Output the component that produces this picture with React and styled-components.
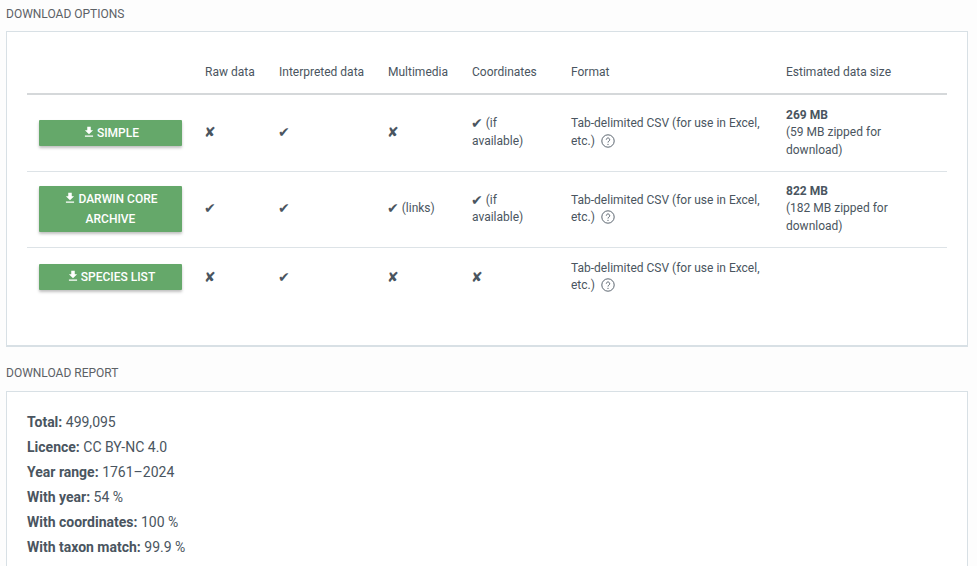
import React from 'react'
import styled, { createGlobalStyle } from 'styled-components'

const GlobalStyle = createGlobalStyle`
  html, body {
    margin: 0;
    padding: 0;
    background: #fdfdfd;
    color: #4a5560;
    font-family: Roboto, "Liberation Sans", sans-serif;
    font-size: 12px;
    overflow: hidden;
  }
`

const Page = styled.div`
  width: 977px;
  height: 566px;
  padding: 0 9px 0 6px;
  box-sizing: border-box;
  overflow: hidden;
`

const SectionTitle = styled.h2`
  margin: 0;
  height: ${p => p.$height}px;
  padding-top: 7px;
  box-sizing: border-box;
  font-size: 12px;
  line-height: 14px;
  font-weight: 400;
  color: #5c6166;
  text-transform: uppercase;
`

const Card = styled.section`
  background: #fff;
  border: 1px solid #d8e0e5;
  border-bottom-width: 2px;
  box-sizing: border-box;
  padding: ${p => p.$padding};
  height: ${p => p.$height};
  margin-bottom: 12px;
`

const Table = styled.table`
  width: 920px;
  table-layout: fixed;
  border-collapse: collapse;
  color: #4a5560;
`

const Col = styled.col`
  width: ${p => p.$width}px;
`

const HeadCell = styled.th`
  height: 62px;
  padding: 0 12px 12px;
  box-sizing: border-box;
  border-bottom: 2px solid #d5d8da;
  text-align: left;
  font-weight: 400;
  line-height: 17px;
  vertical-align: bottom;
  white-space: nowrap;
`

const Row = styled.tr`
  height: ${p => p.$height}px;
  border-bottom: ${p => (p.$last ? 'none' : '1px solid #dde3e7')};
`

const Cell = styled.td`
  padding: 0 12px;
  box-sizing: border-box;
  line-height: 17.5px;
  vertical-align: middle;
`

const Mark = styled.span`
  font-family: "DejaVu Sans", sans-serif;
  font-size: 14px;
  line-height: 1;
  margin-left: -1px;
  vertical-align: -1px;
  color: #4a5560;
`

const DownloadButton = styled.button`
  display: block;
  width: 143px;
  min-height: 26px;
  padding: 3px 12px;
  box-sizing: border-box;
  border: none;
  border-radius: 1px;
  background: #65a86a;
  color: #fff;
  font-family: inherit;
  font-size: 12px;
  font-weight: 500;
  line-height: 20px;
  text-align: center;
  text-transform: uppercase;
  box-shadow: 0 2px 3px rgba(0, 0, 0, 0.25);
`

const ButtonIcon = styled.svg`
  width: 14px;
  height: 14px;
  margin-right: 1px;
  vertical-align: -2px;
  fill: #fff;
`

const HelpIcon = styled.svg`
  width: 14px;
  height: 14px;
  margin-left: 3px;
  vertical-align: -3px;
  fill: none;
  stroke: #4a5560;
`

const ReportBody = styled.div`
  line-height: 25px;
  font-size: 14px;
  color: #4a5560;
`

const ReportLine = styled.div`
  strong {
    font-weight: 700;
  }
`

const Download = ({ label }) => (
  <DownloadButton>
    <ButtonIcon viewBox="0 0 24 24">
      <path d="M19 9h-4V3H9v6H5l7 7 7-7zM5 18v2h14v-2H5z" />
    </ButtonIcon>
    {label}
  </DownloadButton>
)

const Help = () => (
  <HelpIcon viewBox="0 0 14 14">
    <circle cx="7" cy="7" r="6.2" strokeWidth="0.9" />
    <path d="M5.3 5.6a1.7 1.7 0 1 1 2.6 1.5c-.6.4-.9.7-.9 1.4" strokeWidth="0.9" />
    <circle cx="7" cy="10.3" r="0.6" fill="#4a5560" stroke="none" />
  </HelpIcon>
)

const YES = '✔'
const NO = '✘'

const formatText = (
  <>
    Tab-delimited CSV (for use in Excel, etc.) <Help />
  </>
)

const columns = [166, 74, 109, 84, 99, 215, 173]
const headers = ['', 'Raw data', 'Interpreted data', 'Multimedia', 'Coordinates', 'Format', 'Estimated data size']

const rows = [
  {
    label: 'Simple', height: 77, raw: NO, interpreted: YES, media: NO, mediaNote: '',
    coords: YES, coordsNote: ' (if available)', size: '269 MB', zipped: '(59 MB zipped for download)',
  },
  {
    label: 'Darwin Core Archive', height: 76, raw: YES, interpreted: YES, media: YES, mediaNote: ' (links)',
    coords: YES, coordsNote: ' (if available)', size: '822 MB', zipped: '(182 MB zipped for download)',
  },
  {
    label: 'Species list', height: 60, last: true, raw: NO, interpreted: YES, media: NO, mediaNote: '',
    coords: NO, coordsNote: '',
  },
]

const report = [
  ['Total:', '499,095'],
  ['Licence:', 'CC BY-NC 4.0'],
  ['Year range:', '1761–2024'],
  ['With year:', '54 %'],
  ['With coordinates:', '100 %'],
  ['With taxon match:', '99.9 %'],
]

const App = () => (
  <Page>
    <GlobalStyle />
    <SectionTitle $height={31}>Download options</SectionTitle>
    <Card $padding="0 20px" $height="316px">
      <Table>
        <colgroup>
          {columns.map((w, i) => <Col key={i} $width={w} />)}
        </colgroup>
        <thead>
          <tr>
            {headers.map((h, i) => <HeadCell key={i}>{h}</HeadCell>)}
          </tr>
        </thead>
        <tbody>
          {rows.map(r => (
            <Row key={r.label} $height={r.height} $last={r.last}>
              <Cell><Download label={r.label} /></Cell>
              <Cell><Mark>{r.raw}</Mark></Cell>
              <Cell><Mark>{r.interpreted}</Mark></Cell>
              <Cell><Mark>{r.media}</Mark>{r.mediaNote}</Cell>
              <Cell><Mark>{r.coords}</Mark>{r.coordsNote}</Cell>
              <Cell>{formatText}</Cell>
              <Cell>
                {r.size && <strong>{r.size}</strong>}
                {r.size && <br />}
                {r.zipped}
              </Cell>
            </Row>
          ))}
        </tbody>
      </Table>
    </Card>
    <SectionTitle $height={32}>Download report</SectionTitle>
    <Card $padding="18px 20px" $height="220px">
      <ReportBody>
        {report.map(([k, v]) => (
          <ReportLine key={k}><strong>{k}</strong> {v}</ReportLine>
        ))}
      </ReportBody>
    </Card>
  </Page>
)

export default App
